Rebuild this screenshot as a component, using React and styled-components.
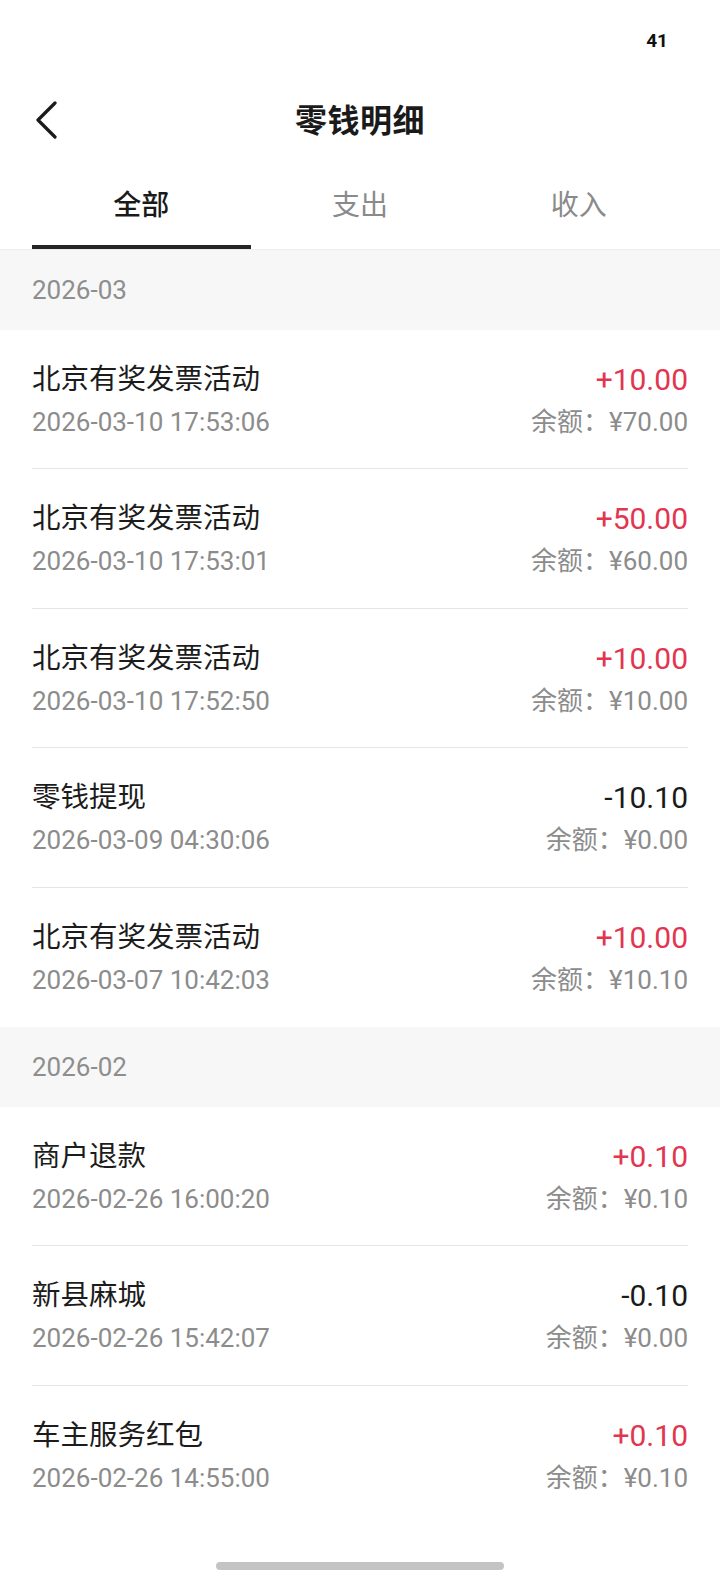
import React, { useState } from 'react'
import styled, { createGlobalStyle } from 'styled-components'

const GlobalStyle = createGlobalStyle`
  * { box-sizing: border-box; }
  html, body {
    margin: 0;
    padding: 0;
    background: #fff;
    font-family: Roboto, "Noto Sans CJK SC", sans-serif;
    -webkit-font-smoothing: antialiased;
  }
`

const Page = styled.div`
  width: 720px;
  min-height: 1584px;
  background: #fff;
  display: flex;
  flex-direction: column;
`

const StatusBar = styled.div`
  height: 80px;
  display: flex;
  align-items: center;
  justify-content: flex-end;
  padding-right: 52px;
  font-size: 19px;
  font-weight: 700;
  color: #111;
`

const NavBar = styled.div`
  height: 80px;
  display: grid;
  grid-template-columns: 1fr auto 1fr;
  align-items: center;
`

const BackButton = styled.button`
  justify-self: start;
  margin-left: 30px;
  width: 34px;
  height: 44px;
  border: 0;
  padding: 0;
  background: none;
  display: flex;
  align-items: center;
  justify-content: center;
`

const Title = styled.h1`
  margin: -4px 0 0;
  font-size: 32px;
  font-weight: 700;
  color: #1a1a1a;
  letter-spacing: 0.5px;
`

const Tabs = styled.div`
  height: 90px;
  padding: 0 32px;
  display: grid;
  grid-template-columns: repeat(3, 1fr);
  border-bottom: 1px solid #ececec;
`

const Tab = styled.div`
  position: relative;
  display: flex;
  align-items: center;
  justify-content: center;
  padding-bottom: 3px;
  font-size: 28px;
  font-weight: ${p => (p.$active ? 500 : 400)};
  color: ${p => (p.$active ? '#1a1a1a' : '#8a8a8a')};
  &::after {
    content: '';
    position: absolute;
    left: 0;
    right: 0;
    bottom: 0;
    height: 4px;
    background: ${p => (p.$active ? '#262626' : 'transparent')};
  }
`

const MonthHeader = styled.div`
  height: 80px;
  padding: 0 32px;
  display: flex;
  align-items: center;
  background: #f7f7f7;
  font-size: 26px;
  color: #8e8e8e;
`

const Row = styled.div`
  height: 139.4px;
  padding: 0 32px;
`

const RowInner = styled.div`
  height: 100%;
  display: flex;
  justify-content: space-between;
  padding-top: 30px;
  border-bottom: ${p => (p.$last ? 'none' : '1px solid #e6e6e6')};
`

const Col = styled.div`
  display: flex;
  flex-direction: column;
  align-items: ${p => (p.$right ? 'flex-end' : 'flex-start')};
  gap: 4px;
`

const Name = styled.div`
  height: 40px;
  line-height: 40px;
  font-size: 28.5px;
  color: #1c1c1c;
`

const Meta = styled.div`
  height: 36px;
  line-height: 36px;
  font-size: 26px;
  color: #8c8c8c;
`

const Amount = styled.div`
  height: 40px;
  line-height: 40px;
  font-size: 30px;
  font-weight: 400;
  color: ${p => (p.$income ? '#e2354f' : '#1a1a1a')};
`

const Footer = styled.div`
  flex: 1;
  display: flex;
  align-items: flex-end;
  justify-content: center;
  padding-bottom: 14px;
`

const HomeBar = styled.div`
  width: 288px;
  height: 8px;
  border-radius: 4px;
  background: #c4c4c4;
`

const groups = [
  {
    month: '2026-03',
    items: [
      { name: '北京有奖发票活动', time: '2026-03-10 17:53:06', amount: '+10.00', balance: '¥70.00' },
      { name: '北京有奖发票活动', time: '2026-03-10 17:53:01', amount: '+50.00', balance: '¥60.00' },
      { name: '北京有奖发票活动', time: '2026-03-10 17:52:50', amount: '+10.00', balance: '¥10.00' },
      { name: '零钱提现', time: '2026-03-09 04:30:06', amount: '-10.10', balance: '¥0.00' },
      { name: '北京有奖发票活动', time: '2026-03-07 10:42:03', amount: '+10.00', balance: '¥10.10' },
    ],
  },
  {
    month: '2026-02',
    items: [
      { name: '商户退款', time: '2026-02-26 16:00:20', amount: '+0.10', balance: '¥0.10' },
      { name: '新县麻城', time: '2026-02-26 15:42:07', amount: '-0.10', balance: '¥0.00' },
      { name: '车主服务红包', time: '2026-02-26 14:55:00', amount: '+0.10', balance: '¥0.10' },
    ],
  },
]

const tabs = ['全部', '支出', '收入']

function BackIcon() {
  return (
    <svg width="24" height="38" viewBox="0 0 24 38" fill="none">
      <path d="M20 2 L3 19 L20 36" stroke="#1a1a1a" strokeWidth="3.2" strokeLinecap="round" strokeLinejoin="round" />
    </svg>
  )
}

export default function App() {
  const [active, setActive] = useState(0)

  return (
    <>
      <GlobalStyle />
      <Page>
        <StatusBar>41</StatusBar>
        <NavBar>
          <BackButton aria-label="返回"><BackIcon /></BackButton>
          <Title>零钱明细</Title>
          <div />
        </NavBar>
        <Tabs>
          {tabs.map((t, i) => (
            <Tab key={t} $active={i === active} onClick={() => setActive(i)}>{t}</Tab>
          ))}
        </Tabs>
        {groups.map(g => (
          <div key={g.month}>
            <MonthHeader>{g.month}</MonthHeader>
            {g.items.map((it, i) => (
              <Row key={it.time}>
                <RowInner $last={i === g.items.length - 1}>
                  <Col>
                    <Name>{it.name}</Name>
                    <Meta>{it.time}</Meta>
                  </Col>
                  <Col $right>
                    <Amount $income={it.amount.startsWith('+')}>{it.amount}</Amount>
                    <Meta>余额：{it.balance}</Meta>
                  </Col>
                </RowInner>
              </Row>
            ))}
          </div>
        ))}
        <Footer><HomeBar /></Footer>
      </Page>
    </>
  )
}
